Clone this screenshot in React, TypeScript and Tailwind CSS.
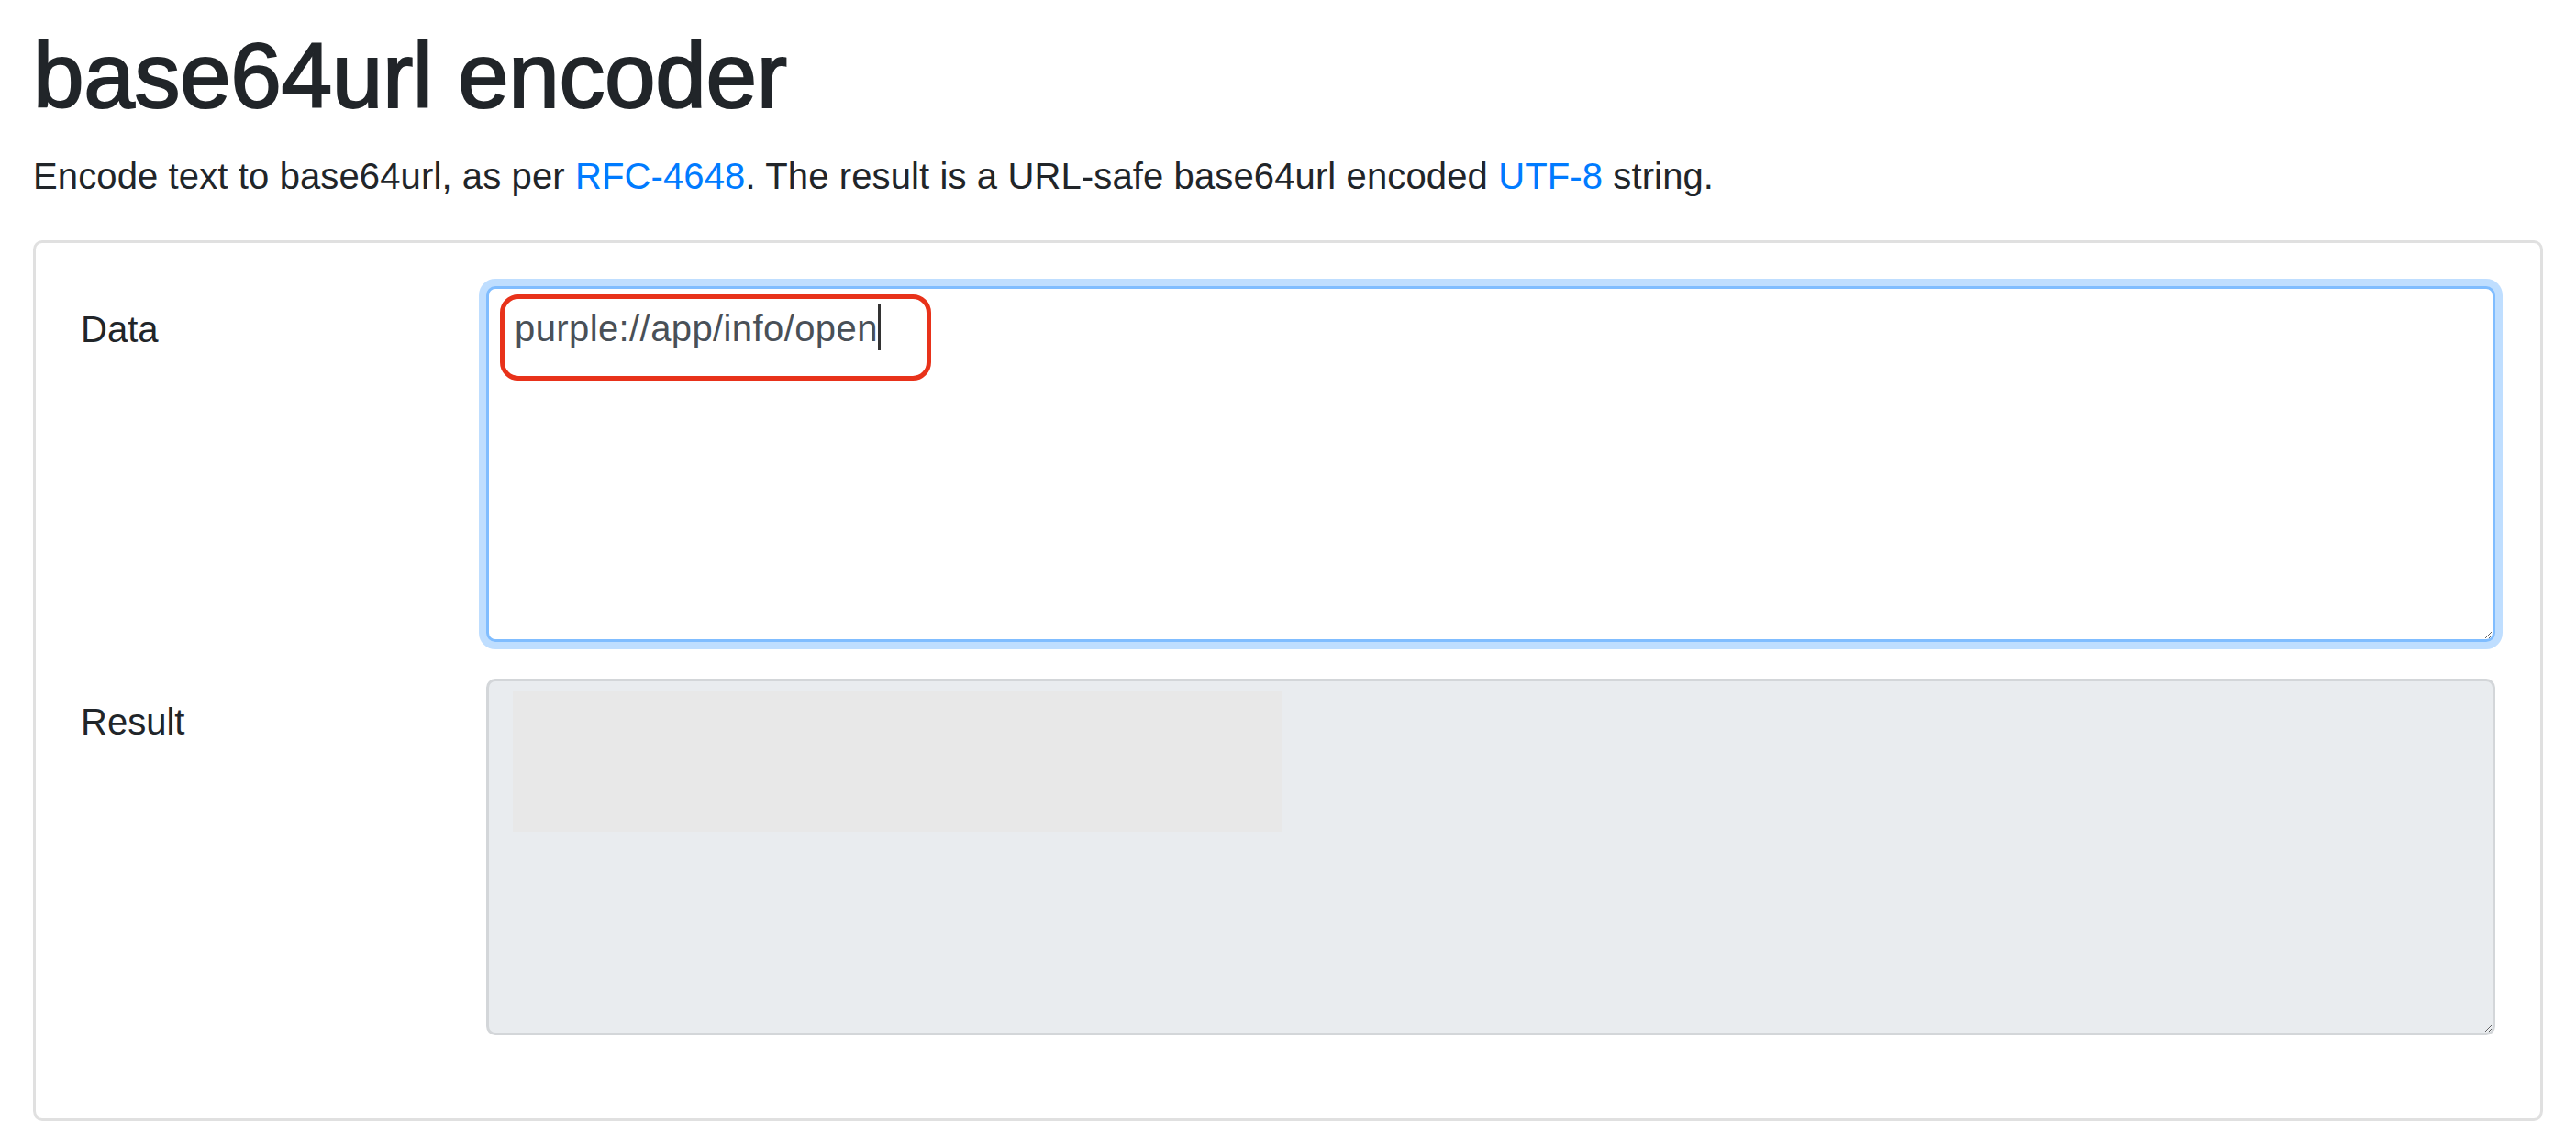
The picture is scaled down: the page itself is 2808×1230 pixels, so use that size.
import React from 'react';

const font = "font-['Liberation_Sans',Arial,sans-serif]";

function FieldRow({ label, children }: { label: string; children: React.ReactNode }) {
  return (
    <div className="grid grid-cols-[442px_1fr] mb-[40px]">
      <label className="pt-[17px] text-[40px] leading-[60px] text-[#212529]">{label}</label>
      {children}
    </div>
  );
}

export default function App() {
  return (
    <div className={`min-h-screen bg-white px-[36px] pt-[22px] ${font} text-[#212529]`}>
      <h1 className="text-[100px] leading-[120px] font-medium mb-[20px] tracking-[-0.4px] [-webkit-text-stroke:2px_#212529]">
        base64url encoder
      </h1>
      <p className="text-[40px] leading-[60px] mb-[40px] tracking-[0.12px]">
        Encode text to base64url, as per <a className="text-[#007bff]">RFC-4648</a>. The result is a URL-safe
        base64url encoded <a className="text-[#007bff]">UTF-8</a> string.
      </p>

      <div className="border-[3px] border-[#e0e0e0] rounded-[10px] px-[49px] pt-[47px] pb-[50px]">
        <FieldRow label="Data">
          {/* focused textarea */}
          <div className="relative">
            <div className="h-[388px] resize-y overflow-auto rounded-[10px] border-[3px] border-[#80bdff] shadow-[0_0_0_8px_rgba(0,123,255,0.25)] bg-white px-[28px] py-[13px] text-[40px] leading-[60px] text-[#495057] tracking-[0.4px]">
              purple://app/info/open<span className="inline-block w-[3px] h-[50px] bg-[#333] align-[-10px]" />
            </div>
            {/* annotation */}
            <div className="absolute left-[15px] top-[9px] w-[470px] h-[94px] rounded-[20px] border-[5px] border-[#e8321a]" />
          </div>
        </FieldRow>
        <FieldRow label="Result">
          <div className="relative">
            <div className="h-[389px] resize-y overflow-auto rounded-[10px] border-[3px] border-[#d3d6d9] bg-[#e9ecef]" />
            <div className="absolute left-[29px] top-[13px] w-[838px] h-[154px] bg-[#e8e8e8]" />
          </div>
        </FieldRow>
      </div>
    </div>
  );
}
